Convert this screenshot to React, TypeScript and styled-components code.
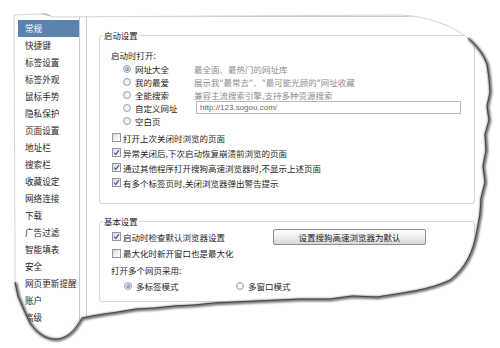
import React from 'react';
import styled, { createGlobalStyle, css } from 'styled-components';

const GlobalStyle = createGlobalStyle`
  html, body {
    margin: 0;
    padding: 0;
    background: #fff;
  }
  body {
    font-family: "Noto Sans CJK SC", "Noto Sans", sans-serif;
    color: #262626;
  }
`;

const FONT = `"Noto Sans CJK SC", "Noto Sans", sans-serif`;

const Stage = styled.div`
  position: relative;
  width: 500px;
  height: 348px;
  overflow: hidden;
  background: #fff;
`;

const Dialog = styled.div`
  display: flex;
  align-items: flex-start;
  padding: 16px 0 0 18px;
  height: 100%;
  box-sizing: border-box;
`;

// --- left navigation ---

const Sidebar = styled.nav`
  width: 63px;
  height: 100%;
  box-sizing: border-box;
  padding-top: 4px;
  border-right: 1px solid #c9c9c9;
  display: flex;
  flex-direction: column;
`;

const NavItem = styled.div<{ $active?: boolean }>`
  height: 17px;
  line-height: 17px;
  padding-left: 7px;
  font-size: 8.6px;
  white-space: nowrap;
  color: #262626;
  ${p =>
    p.$active &&
    css`
      background: #5b83ad;
      color: #fff;
    `}
`;

// --- right settings panel ---

const Panel = styled.div`
  margin-left: 6px;
  width: 420px;
  height: 100%;
  box-sizing: border-box;
  border-left: 1px solid #cdcdcd;
  border-top: 1px solid #cdcdcd;
  padding: 13px 0 0 12px;
`;

const Group = styled.fieldset<{ $gap?: number }>`
  margin: ${p => p.$gap ?? 0}px 0 0 0;
  padding: 0;
  width: 376px;
  box-sizing: border-box;
  border: 1px solid #d6d6d6;
  border-radius: 3px;
  min-width: 0;
`;

const Legend = styled.legend`
  margin-left: 3px;
  padding: 0 1px;
  font-size: 8.4px;
  line-height: 11px;
  color: #222;
`;

const GroupBody = styled.div<{ $pad: string }>`
  padding: ${p => p.$pad};
  font-size: 8.5px;
`;

const Caption = styled.div<{ $h?: number }>`
  height: ${p => p.$h ?? 13}px;
  line-height: ${p => p.$h ?? 13}px;
  white-space: nowrap;
`;

const RadioList = styled.div`
  margin-left: 12px;
  display: flex;
  flex-direction: column;
`;

const RadioRow = styled.div`
  display: grid;
  grid-template-columns: 71px 1fr;
  align-items: center;
  height: 13px;
`;

const OptionLabel = styled.label`
  display: flex;
  align-items: center;
  gap: 4px;
  white-space: nowrap;
`;

const Hint = styled.span`
  color: #8d8d8d;
  white-space: nowrap;
`;

const UrlInput = styled.div`
  margin-left: 2px;
  width: 265px;
  height: 13px;
  box-sizing: border-box;
  border: 1px solid #b9b9b9;
  padding-left: 3px;
  font-family: "Liberation Sans", Arial, sans-serif;
  font-size: 8px;
  line-height: 11px;
  color: #666;
`;

const RadioDot = styled.span<{ $on?: boolean }>`
  position: relative;
  flex: none;
  width: 8px;
  height: 8px;
  box-sizing: border-box;
  border-radius: 50%;
  border: 1px solid #97a1ad;
  background: radial-gradient(circle at 60% 60%, #ffffff, #dfe3e8);
  ${p =>
    p.$on &&
    css`
      &::after {
        content: '';
        position: absolute;
        left: 1px;
        top: 1px;
        width: 4px;
        height: 4px;
        border-radius: 50%;
        background: radial-gradient(circle at 35% 35%, #b9d0f2, #2f61bd);
      }
    `}
`;

const CheckList = styled.div<{ $top?: number }>`
  margin-top: ${p => p.$top ?? 0}px;
  margin-left: 1px;
  display: flex;
  flex-direction: column;
`;

const CheckRow = styled.div<{ $h?: number }>`
  display: flex;
  align-items: center;
  height: ${p => p.$h ?? 15}px;
`;

const CheckBoxFace = styled.span`
  flex: none;
  width: 9px;
  height: 9px;
  box-sizing: border-box;
  border: 1px solid #969696;
  background: linear-gradient(135deg, #d9d9d9, #f6f6f6 70%, #ffffff);
  display: flex;
  align-items: center;
  justify-content: center;
`;

const CheckText = styled.span`
  margin-left: 2px;
  white-space: nowrap;
`;

const ButtonCol = styled.div`
  display: grid;
  grid-template-columns: 161px 153px;
  align-items: center;
  height: 17px;
`;

const DefaultButton = styled.button`
  width: 153px;
  height: 16px;
  padding: 0;
  border: 1px solid #8f8f8f;
  border-radius: 2px;
  background: linear-gradient(#fdfdfd, #ececec 55%, #d7d7d7);
  font-family: ${FONT};
  font-size: 8.5px;
  color: #222;
  line-height: 14px;
`;

const ModeRow = styled.div`
  display: grid;
  grid-template-columns: 112px 112px;
  align-items: center;
  height: 16.5px;
  margin-left: 13px;
`;

// --- torn paper overlay & watermark ---

const PaperEdge = styled.svg`
  position: absolute;
  left: 0;
  top: 0;
  pointer-events: none;
`;

const Watermark = styled.div`
  position: absolute;
  left: 380px;
  top: 298px;
  display: flex;
  flex-direction: column;
  align-items: flex-start;
  color: #f3f3f3;
  pointer-events: none;
`;

const MarkTop = styled.div`
  display: flex;
  align-items: center;
  gap: 2px;
`;

const MarkWord = styled.span<{ $cjk?: boolean }>`
  font-family: ${p => (p.$cjk ? FONT : `"Liberation Sans", Arial, sans-serif`)};
  font-size: ${p => (p.$cjk ? 15 : 19)}px;
  font-weight: 700;
  line-height: 22px;
  -webkit-text-stroke: 0.6px #e4e4e4;
`;

const MarkSub = styled.span`
  font-family: "Liberation Sans", Arial, sans-serif;
  font-size: 8px;
  color: #ebebeb;
  margin-left: 2px;
`;

const Check = ({ on }: { on?: boolean }) => (
  <CheckBoxFace>
    {on && (
      <svg width="7" height="7" viewBox="0 0 7 7">
        <path d="M1 3.6 L2.8 5.4 L6 1.2" fill="none" stroke="#4a5cc4" strokeWidth="1.3" />
      </svg>
    )}
  </CheckBoxFace>
);

const navItems = [
  '常规', '快捷键', '标签设置', '标签外观', '鼠标手势', '隐私保护', '页面设置', '地址栏', '搜索栏',
  '收藏设定', '网络连接', '下载', '广告过滤', '智能填表', '安全', '网页更新提醒', '账户', '高级',
];

const startPages = [
  { label: '网址大全', hint: '最全面、最热门的网址库', on: true },
  { label: '我的最爱', hint: '展示我"最常去"、"最可能光顾的"网址收藏' },
  { label: '全能搜索', hint: '兼容主流搜索引擎,支持多种资源搜索' },
  { label: '自定义网址', url: 'http://123.sogou.com/' },
  { label: '空白页' },
];

const startChecks = [
  { text: '打开上次关闭时浏览的页面', on: false },
  { text: '异常关闭后,下次启动恢复崩溃前浏览的页面', on: true },
  { text: '通过其他程序打开搜狗高速浏览器时,不显示上述页面', on: true },
  { text: '有多个标签页时,关闭浏览器弹出警告提示', on: true },
];

const outline =
  'M14 15 L40 14 Q47 12 52 17 L400 15 C425 16 450 24 468 38 C477 46 483 53 487 64 ' +
  'L489 78 L490 92 L487 106 L489 120 L485 134 L486 150 L483 166 L485 182 L481 198 L480 214 L477 230 ' +
  'C474 250 466 268 450 280 C430 290 402 293 377 297 L352 296 L330 299 L300 299 L278 300 L255 301 ' +
  'L234 302 L214 303 L194 305 L174 306 L155 308 L136 309 L118 312 L104 314 L92 316 L82 318 ' +
  'C76 328 70 337 58 339 C46 340 37 333 30 323 L24 310 L18 296 L15 282 L15 250 Z';

const darkEdge =
  'M468 38 C477 46 483 53 487 64 ' +
  'L489 78 L490 92 L487 106 L489 120 L485 134 L486 150 L483 166 L485 182 L481 198 L480 214 L477 230 ' +
  'C474 250 466 268 450 280 C430 290 402 293 377 297 L352 296 L330 299 L300 299 L278 300 L255 301 ' +
  'L234 302 L214 303 L194 305 L174 306 L155 308 L136 309 L118 312 L104 314 L92 316 L82 318 ' +
  'C76 328 70 337 58 339 C46 340 37 333 30 323 L24 310 L18 296 L15 282';

const App = () => (
  <>
    <GlobalStyle />
    <Stage>
      <Dialog>
        <Sidebar>
          {navItems.map((n, i) => (
            <NavItem key={n} $active={i === 0}>
              {n}
            </NavItem>
          ))}
        </Sidebar>

        <Panel>
          <Group>
            <Legend>启动设置</Legend>
            <GroupBody $pad="8px 0 13px 11px">
              <Caption>启动时打开:</Caption>
              <RadioList>
                {startPages.map(p => (
                  <RadioRow key={p.label}>
                    <OptionLabel>
                      <RadioDot $on={p.on} />
                      {p.label}
                    </OptionLabel>
                    {p.hint && <Hint>{p.hint}</Hint>}
                    {p.url && <UrlInput>{p.url}</UrlInput>}
                  </RadioRow>
                ))}
              </RadioList>
              <CheckList $top={3}>
                {startChecks.map(c => (
                  <CheckRow key={c.text}>
                    <Check on={c.on} />
                    <CheckText>{c.text}</CheckText>
                  </CheckRow>
                ))}
              </CheckList>
            </GroupBody>
          </Group>

          <Group $gap={12}>
            <Legend>基本设置</Legend>
            <GroupBody $pad="1px 0 6px 11px">
              <CheckList>
                <ButtonCol>
                  <CheckRow $h={17}>
                    <Check on />
                    <CheckText>启动时检查默认浏览器设置</CheckText>
                  </CheckRow>
                  <DefaultButton>设置搜狗高速浏览器为默认</DefaultButton>
                </ButtonCol>
                <CheckRow $h={16.5}>
                  <Check />
                  <CheckText>最大化时新开窗口也是最大化</CheckText>
                </CheckRow>
              </CheckList>
              <Caption $h={16.5}>打开多个网页采用:</Caption>
              <ModeRow>
                <OptionLabel>
                  <RadioDot $on />
                  多标签模式
                </OptionLabel>
                <OptionLabel>
                  <RadioDot />
                  多窗口模式
                </OptionLabel>
              </ModeRow>
            </GroupBody>
          </Group>
        </Panel>
      </Dialog>

      <Watermark>
        <MarkTop>
          <MarkWord>Bai</MarkWord>
          <svg width="18" height="20" viewBox="0 0 18 20">
            <g fill="#f4f4f4" stroke="#e2e2e2" strokeWidth="0.7">
              <ellipse cx="4" cy="6" rx="2" ry="2.6" />
              <ellipse cx="8" cy="3" rx="2" ry="2.4" />
              <ellipse cx="12.5" cy="3.4" rx="2" ry="2.4" />
              <ellipse cx="15.5" cy="7.5" rx="1.8" ry="2.3" />
              <path d="M9 9 C5 9 3 14 4 16 C5 18 8 17 9.5 17 C11 17 14 18 15 16 C16 14 13 9 9 9 Z" />
            </g>
          </svg>
          <MarkWord $cjk>经验</MarkWord>
        </MarkTop>
        <MarkSub>jingyan.baidu.com</MarkSub>
      </Watermark>

      <PaperEdge width="500" height="348" viewBox="0 0 500 348">
        <defs>
          <filter id="soft" x="-5%" y="-5%" width="110%" height="110%">
            <feGaussianBlur stdDeviation="0.9" />
          </filter>
        </defs>
        <path d={`M0 0 H500 V348 H0 Z ${outline}`} fill="#fff" fillRule="evenodd" />
        <path d={outline} fill="none" stroke="#d4d4d4" strokeWidth="1" />
        <path d={darkEdge} fill="none" stroke="#606060" strokeWidth="2.8" filter="url(#soft)" transform="translate(0.8 0.8)" />
        <path d={darkEdge} fill="none" stroke="#444" strokeWidth="1" />
        <path d="M40 14 Q47 12 52 17 Q46 15 40 14 Z" fill="#bdbdbd" />
      </PaperEdge>
    </Stage>
  </>
);

export default App;
